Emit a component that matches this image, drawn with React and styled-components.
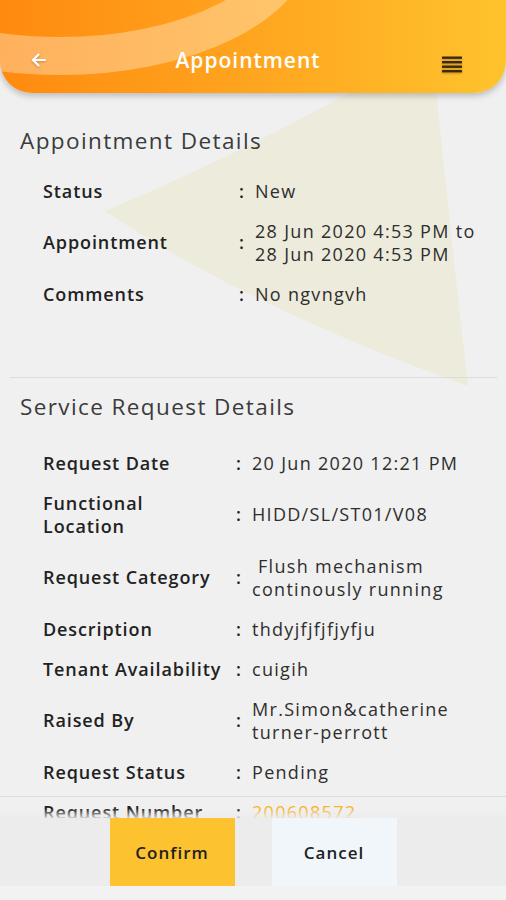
import React from 'react';
import styled, { createGlobalStyle } from 'styled-components';

const GlobalStyle = createGlobalStyle`
  html, body {
    margin: 0;
    padding: 0;
    background: #f0f0f0;
  }
  body {
    font-family: 'Open Sans', 'Liberation Sans', sans-serif;
  }
`;

const Screen = styled.div`
  position: relative;
  width: 506px;
  height: 900px;
  overflow: hidden;
  background: #f0f0f0;
  display: flex;
  flex-direction: column;
`;

const Watermark = styled.svg`
  position: absolute;
  left: 0;
  top: 0;
  z-index: 0;
`;

const Header = styled.header`
  position: relative;
  z-index: 3;
  flex: 0 0 93px;
  display: flex;
  align-items: center;
  justify-content: space-between;
  padding: 27px 42px 0 27px;
  box-sizing: border-box;
  border-radius: 0 0 32px 32px;
  background: linear-gradient(90deg, #ff8a0f 0%, #ffa51f 50%, #ffc32d 100%);
  box-shadow: 0 3px 6px rgba(0, 0, 0, 0.22);
  overflow: hidden;
`;

const Swoosh = styled.svg`
  position: absolute;
  left: 0;
  top: 0;
  pointer-events: none;
`;

const IconButton = styled.button`
  position: relative;
  z-index: 1;
  width: 24px;
  height: 24px;
  margin-top: ${p => p.$drop || 0}px;
  margin-right: ${p => p.$gap || 0}px;
  padding: 0;
  border: 0;
  background: none;
  display: flex;
  align-items: center;
  justify-content: center;
  filter: drop-shadow(0 1px 1px rgba(0, 0, 0, 0.25));
`;

const Title = styled.h1`
  position: relative;
  z-index: 1;
  margin: 0;
  font-size: 21px;
  font-weight: 600;
  color: #fff;
  letter-spacing: 1px;
`;

const Content = styled.main`
  position: relative;
  z-index: 1;
  flex: 1;
  overflow: hidden;
`;

const Section = styled.section`
  padding-top: ${p => p.$top}px;
`;

const Heading = styled.h2`
  margin: 0 0 ${p => p.$gap}px 20px;
  font-size: 22.5px;
  line-height: 28px;
  font-weight: 500;
  color: #3b3b3b;
  letter-spacing: 1.4px;
`;

const Row = styled.div`
  display: grid;
  grid-template-columns: ${p => p.$label}px 16px 1fr;
  align-items: center;
  padding: 8.5px 10px 8.5px 43px;
  font-size: 18px;
  line-height: 23px;
`;

const Label = styled.div`
  font-weight: 600;
  color: #222;
  letter-spacing: 0.9px;
  white-space: pre-line;
`;

const Colon = styled.div`
  font-weight: 600;
  color: #222;
`;

const Value = styled.div`
  color: ${p => (p.$accent ? '#f7b52b' : '#2e2e2e')};
  letter-spacing: 1.3px;
  white-space: pre-wrap;
`;

const Divider = styled.hr`
  margin: ${p => p.$top}px 9px 0 10px;
  border: 0;
  border-top: 1px solid #dcdcdc;
`;

const Footer = styled.footer`
  position: absolute;
  left: 0;
  right: 0;
  bottom: 0;
  z-index: 2;
  display: flex;
  flex-direction: column;
`;

const Fade = styled.div`
  height: 21px;
  border-top: 1px solid #dcdcdc;
  background: linear-gradient(180deg, rgba(236, 236, 236, 0) 0%, rgba(236, 236, 236, 0) 55%, rgba(236, 236, 236, 0.85) 100%);
`;

const ButtonBar = styled.div`
  height: 68px;
  display: flex;
  justify-content: center;
  gap: 37px;
  background: #ececec;
`;

const Button = styled.button`
  width: 125px;
  height: 68px;
  border: 0;
  border-radius: 0;
  font-family: inherit;
  font-size: 17px;
  font-weight: 600;
  letter-spacing: 1px;
  color: #1f1f1f;
  background: ${p => (p.$primary ? '#fcc230' : '#f1f6fb')};
`;

const BottomStrip = styled.div`
  height: 14px;
  background: #f2f2f2;
`;

const appointment = [
  { label: 'Status', value: 'New' },
  { label: 'Appointment', value: '28 Jun 2020 4:53 PM to\n28 Jun 2020 4:53 PM' },
  { label: 'Comments', value: 'No ngvngvh' },
];

const service = [
  { label: 'Request Date', value: '20 Jun 2020 12:21 PM' },
  { label: 'Functional\nLocation', value: 'HIDD/SL/ST01/V08' },
  { label: 'Request Category', value: ' Flush mechanism\ncontinously running' },
  { label: 'Description', value: 'thdyjfjfjfjyfju' },
  { label: 'Tenant Availability', value: 'cuigih' },
  { label: 'Raised By', value: 'Mr.Simon&catherine\nturner-perrott' },
  { label: 'Request Status', value: 'Pending' },
  { label: 'Request Number', value: '200608572', accent: true },
];

const DetailRows = ({ items, labelWidth }) =>
  items.map(item => (
    <Row key={item.label} $label={labelWidth}>
      <Label>{item.label}</Label>
      <Colon>:</Colon>
      <Value $accent={item.accent}>{item.value}</Value>
    </Row>
  ));

export default function App() {
  return (
    <Screen>
      <GlobalStyle />
      <Watermark width="506" height="420" viewBox="0 0 506 420">
        <path
          d="M390 70 L434 70 Q450 230 468 386 Q249 308 105 211 Q250 150 390 70 Z"
          fill="#edebdb"
        />
      </Watermark>

      <Header>
        <Swoosh width="506" height="93" viewBox="0 0 506 93">
          <ellipse cx="60" cy="-64" rx="236" ry="120" fill="none" stroke="rgba(255,255,255,0.33)" strokeWidth="38" />
        </Swoosh>
        <IconButton aria-label="Back" $gap={5}>
          <svg width="20" height="20" viewBox="0 0 20 20" fill="none" stroke="#fff" strokeWidth="2.2" strokeLinecap="round" strokeLinejoin="round">
            <path d="M16 10 H4.5" />
            <path d="M9.5 4.5 L4 10 L9.5 15.5" />
          </svg>
        </IconButton>
        <Title>Appointment</Title>
        <IconButton aria-label="Menu" $drop={8}>
          <svg width="22" height="18" viewBox="0 0 22 18">
            <g fill="#3d2a0c">
              <rect x="1" y="1.5" width="20" height="2.4" />
              <rect x="1" y="6" width="20" height="2.4" />
              <rect x="1" y="10.5" width="20" height="2.4" />
              <rect x="1" y="15" width="20" height="2.4" />
            </g>
          </svg>
        </IconButton>
      </Header>

      <Content>
        <Section $top={34}>
          <Heading $gap={16}>Appointment Details</Heading>
          <DetailRows items={appointment} labelWidth={196} />
          <Divider $top={63} />
        </Section>
        <Section $top={15}>
          <Heading $gap={22}>Service Request Details</Heading>
          <DetailRows items={service} labelWidth={193} />
        </Section>
      </Content>

      <Footer>
        <Fade />
        <ButtonBar>
          <Button $primary>Confirm</Button>
          <Button>Cancel</Button>
        </ButtonBar>
        <BottomStrip />
      </Footer>
    </Screen>
  );
}
